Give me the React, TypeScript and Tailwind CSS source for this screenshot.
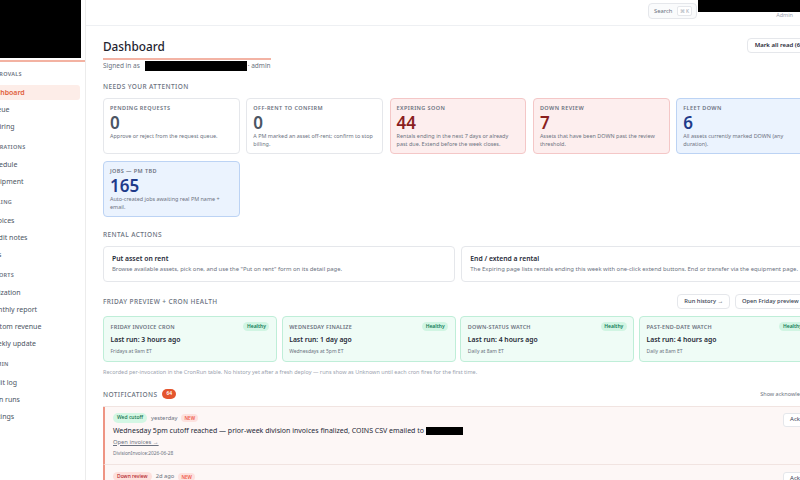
import { useState } from 'react';

const NAV = [
  { label: 'APPROVALS', items: ['Dashboard', 'Queue', 'Expiring'] },
  { label: 'OPERATIONS', items: ['Schedule', 'Equipment'] },
  { label: 'BILLING', items: ['Invoices', 'Credit notes', 'Jobs'] },
  { label: 'REPORTS', items: ['Utilization', 'Monthly report', 'Custom revenue', 'Weekly update'] },
  { label: 'ADMIN', items: ['Audit log', 'Cron runs', 'Settings'] },
];

const TONES = {
  neutral: { box: 'border-[#e5e7eb] bg-white', num: 'text-[#4b5563]' },
  red: { box: 'border-[#f4c7c7] bg-[#fdeeee]', num: 'text-[#8a1f1f]' },
  blue: { box: 'border-[#bcd3f4] bg-[#ebf3fe]', num: 'text-[#1e3a8a]' },
};

const STATS: { label: string; value: string; desc: string; tone: keyof typeof TONES }[] = [
  { label: 'Pending requests', value: '0', desc: 'Approve or reject from the request queue.', tone: 'neutral' },
  { label: 'Off-rent to confirm', value: '0', desc: 'A PM marked an asset off-rent; confirm to stop billing.', tone: 'neutral' },
  {
    label: 'Expiring soon',
    value: '44',
    desc: 'Rentals ending in the next 7 days or already past due. Extend before the week closes.',
    tone: 'red',
  },
  { label: 'Down review', value: '7', desc: 'Assets that have been DOWN past the review threshold.', tone: 'red' },
  { label: 'Fleet down', value: '6', desc: 'All assets currently marked DOWN (any duration).', tone: 'blue' },
  { label: 'Jobs — PM TBD', value: '165', desc: 'Auto-created jobs awaiting real PM name + email.', tone: 'blue' },
];

const CRONS = [
  { label: 'Friday invoice cron', run: 'Last run: 3 hours ago', when: 'Fridays at 9am ET' },
  { label: 'Wednesday finalize', run: 'Last run: 1 day ago', when: 'Wednesdays at 5pm ET' },
  { label: 'Down-status watch', run: 'Last run: 4 hours ago', when: 'Daily at 8am ET' },
  { label: 'Past-end-date watch', run: 'Last run: 4 hours ago', when: 'Daily at 8am ET' },
];

function SectionTitle({ children }: { children: React.ReactNode }) {
  return (
    <h2 className="text-[6.5px] leading-[9px] font-medium uppercase tracking-[0.4px] text-[#6b7280]">{children}</h2>
  );
}

function Sidebar() {
  const [active, setActive] = useState('Dashboard');
  return (
    <aside className="-ml-[30px] flex w-[116px] shrink-0 flex-col border-r border-[#ececec] bg-white">
      <div className="h-[62px] border-b-2 border-[#f3b2a2]">
        <div className="h-[58px] w-[111px] bg-black" />
      </div>
      <nav className="flex flex-col gap-[9px] pt-[8px] pr-[5px] pl-[7px]">
        {NAV.map((section) => (
          <div key={section.label}>
            <div className="mb-[5.5px] pl-[11px] text-[5.5px] leading-[9px] font-semibold tracking-[0.3px] text-[#6b7280]">
              {section.label}
            </div>
            <div className="flex flex-col gap-[2px]">
              {section.items.map((item) => (
                <button
                  key={item}
                  onClick={() => setActive(item)}
                  className={
                    item === active
                      ? 'h-[15px] rounded-[3px] bg-[#fdede8] pl-[10.5px] text-left text-[7px] leading-[15px] font-semibold text-[#e0603a]'
                      : 'h-[15px] rounded-[3px] pl-[10.5px] text-left text-[7px] leading-[15px] text-[#4b5563]'
                  }
                >
                  {item}
                </button>
              ))}
            </div>
          </div>
        ))}
      </nav>
    </aside>
  );
}

function StatCard({ label, value, desc, tone }: (typeof STATS)[number]) {
  const t = TONES[tone];
  return (
    <div className={`rounded-[4px] border px-[6px] pt-[6px] pb-[4.5px] ${t.box}`}>
      <div className="text-[5.5px] leading-[7px] font-semibold uppercase tracking-[0.4px] text-[#6b7280]">{label}</div>
      <div className={`mt-[1px] text-[17px] leading-[19px] font-semibold ${t.num}`}>{value}</div>
      <p className="text-[5.45px] leading-[8.5px] text-[#6b7280]">{desc}</p>
    </div>
  );
}

function CronCard({ label, run, when }: (typeof CRONS)[number]) {
  return (
    <div className="rounded-[4px] border border-[#bfeed8] bg-[#effcf6] px-[6.5px] pt-[5.5px] pb-[6.5px]">
      <div className="flex h-[9px] items-center justify-between">
        <span className="text-[5.5px] leading-[8px] font-semibold uppercase tracking-[0.2px] text-[#6b7280]">{label}</span>
        <span className="rounded-full bg-[#d1f5e3] px-[3.5px] text-[5px] leading-[8.5px] font-semibold text-[#0f7a55]">
          Healthy
        </span>
      </div>
      <div className="mt-[3.5px] text-[6.8px] leading-[10px] font-semibold text-[#1f2937]">{run}</div>
      <div className="mt-[3px] text-[5px] leading-[7px] text-[#6b7280]">{when}</div>
    </div>
  );
}

function Notification({
  chip,
  chipClass,
  when,
  children,
}: {
  chip: string;
  chipClass: string;
  when: string;
  children?: React.ReactNode;
}) {
  return (
    <div className="flex items-start justify-between border-b border-l-2 border-b-[#f1e4e1] border-l-[#ee9483] bg-[#fdf7f6] pt-[6.5px] pr-[6px] pb-[7.5px] pl-[8px]">
      <div className="flex flex-col">
        <div className="flex h-[10px] items-center gap-[4px]">
          <span className={`rounded-full px-[4px] text-[5px] leading-[9.5px] font-medium ${chipClass}`}>{chip}</span>
          <span className="text-[5.8px] text-[#6b7280]">{when}</span>
          <span className="rounded-full bg-[#fde2df] px-[3px] text-[4.6px] leading-[8px] font-semibold text-[#ef5a46]">
            NEW
          </span>
        </div>
        {children}
      </div>
      <button className="h-[13.5px] rounded-[3px] border border-[#e5e7eb] bg-white px-[6px] text-[6px] text-[#374151]">
        Ack
      </button>
    </div>
  );
}

export default function App() {
  return (
    <div
      className="flex h-[480px] w-[800px] overflow-hidden bg-white text-[#1f2937]"
      style={{ fontFamily: '"Noto Sans", "Open Sans", sans-serif' }}
    >
      <Sidebar />
      <main className="flex w-[742px] shrink-0 flex-col">
        <header className="flex h-[26px] shrink-0 items-start justify-end border-b border-[#eef0f3] pr-[17px]">
          <div className="mt-[3px] flex h-[16px] w-[49px] items-center justify-between rounded-[4px] border border-[#e5e7eb] bg-[#fafbfc] pr-[4px] pl-[5px]">
            <span className="text-[5.8px] text-[#6b7280]">Search</span>
            <span className="rounded-[2px] border border-[#e5e7eb] bg-white px-[2px] text-[5px] leading-[8px] text-[#9ca3af]">
              ⌘ K
            </span>
          </div>
          <div className="ml-[1px] flex w-[113px] flex-col">
            <div className="h-[12px] w-full bg-black" />
            <div className="pr-[18px] text-right text-[5.5px] leading-[6px] text-[#9ca3af]">Admin</div>
          </div>
        </header>

        <div className="flex flex-col pr-[15px] pl-[17px]">
          <div className="flex items-start justify-between pt-[13px]">
            <div className="flex w-fit flex-col">
              <h1 className="text-[11.8px] leading-[15px] font-medium text-[#1f2430]">Dashboard</h1>
              <div className="mt-[4px] h-[1.5px] w-full bg-[#f3b3a4]" />
              <div className="mt-[1px] flex h-[10px] items-center text-[6.5px] leading-[10px] text-[#6b7280]">
                <span>Signed in as</span>
                <span className="ml-[5px] h-[10px] w-[102px] bg-black" />
                <span className="ml-[1px]">· admin</span>
              </div>
            </div>
            <button className="-mt-[1px] h-[15px] rounded-[4px] border border-[#e5e7eb] bg-white px-[6.5px] text-[6px] font-semibold text-[#1f2937]">
              Mark all read (64)
            </button>
          </div>

          <div className="mt-[11px]">
            <SectionTitle>Needs your attention</SectionTitle>
          </div>
          <div className="mt-[7px] grid grid-cols-5 gap-[6.5px]">
            {STATS.map((s) => (
              <StatCard key={s.label} {...s} />
            ))}
          </div>

          <div className="mt-[12.5px]">
            <SectionTitle>Rental actions</SectionTitle>
          </div>
          <div className="mt-[7px] grid grid-cols-2 gap-[6.5px]">
            <div className="rounded-[4px] border border-[#e5e7eb] bg-white px-[8px] py-[7.5px]">
              <div className="text-[6.8px] leading-[9px] font-semibold text-[#1f2937]">Put asset on rent</div>
              <p className="mt-[2px] text-[5.9px] leading-[8px] text-[#6b7280]">
                Browse available assets, pick one, and use the "Put on rent" form on its detail page.
              </p>
            </div>
            <div className="rounded-[4px] border border-[#e5e7eb] bg-white px-[8px] py-[7.5px]">
              <div className="text-[6.8px] leading-[9px] font-semibold text-[#1f2937]">End / extend a rental</div>
              <p className="mt-[2px] text-[5.9px] leading-[8px] whitespace-nowrap text-[#6b7280]">
                The Expiring page lists rentals ending this week with one-click extend buttons. End or transfer via the
                equipment page.
              </p>
            </div>
          </div>

          <div className="mt-[12.5px] flex h-[15px] items-center justify-between">
            <SectionTitle>Friday preview + cron health</SectionTitle>
            <div className="flex gap-[4.5px]">
              <button className="h-[15px] rounded-[4px] border border-[#e5e7eb] bg-white px-[6px] text-[5.8px] font-medium text-[#374151]">
                Run history →
              </button>
              <button className="h-[15px] rounded-[4px] border border-[#e5e7eb] bg-white px-[6px] text-[5.8px] font-medium text-[#374151]">
                Open Friday preview →
              </button>
            </div>
          </div>
          <div className="mt-[6.5px] grid grid-cols-4 gap-[4.7px]">
            {CRONS.map((c) => (
              <CronCard key={c.label} {...c} />
            ))}
          </div>
          <p className="mt-[7px] text-[5.5px] leading-[7px] whitespace-nowrap text-[#9ca3af]">
            Recorded per-invocation in the CronRun table. No history yet after a fresh deploy — runs show as Unknown
            until each cron fires for the first time.
          </p>

          <div className="mt-[13px] flex h-[10px] items-center justify-between">
            <div className="flex items-center gap-[5px]">
              <SectionTitle>Notifications</SectionTitle>
              <span className="rounded-full bg-[#e4552e] px-[4px] text-[5px] leading-[9.5px] font-semibold text-white">
                64
              </span>
            </div>
            <span className="text-[5.5px] text-[#6b7280]">Show acknowledged</span>
          </div>

          <div className="mt-[6.5px] flex flex-col border-t border-[#f1e4e1]">
            <Notification chip="Wed cutoff" chipClass="bg-[#d4f7e4] text-[#0f6e4b]" when="yesterday">
              <div className="mt-[3px] flex h-[10px] items-center text-[7px] leading-[10px] text-[#1f2937]">
                <span>
                  Wednesday 5pm cutoff reached — prior-week division invoices finalized, COINS CSV emailed to
                </span>
                <span className="ml-[2px] h-[8.5px] w-[37px] bg-black" />
              </div>
              <a className="mt-[1.5px] text-[5.8px] leading-[8px] text-[#6b7280] underline">Open invoices →</a>
              <div className="mt-[4px] text-[4.8px] leading-[7px] text-[#6b7280]">DivisionInvoice:2026-06-28</div>
            </Notification>
            <Notification chip="Down review" chipClass="bg-[#fde0dc] text-[#b4232a]" when="2d ago" />
          </div>
        </div>
      </main>
    </div>
  );
}
